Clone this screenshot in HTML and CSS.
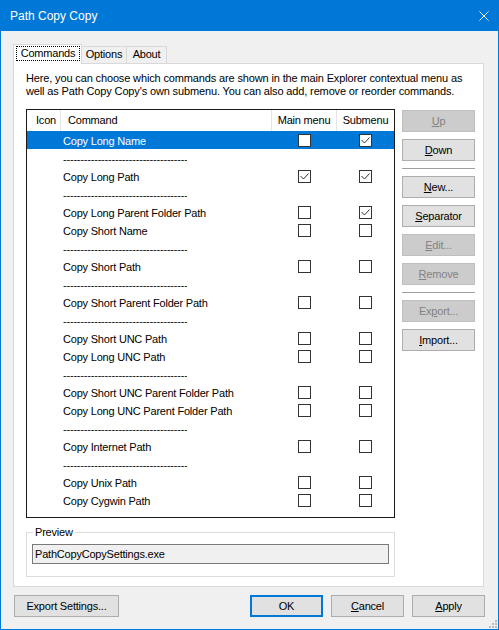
FILE: index.html
```html
<!DOCTYPE html>
<html lang="en">
<head>
  <meta charset="UTF-8" />
  <title>Path Copy Copy</title>
  <link rel="stylesheet" href="styles.css">
</head>
<body>
  <div class="window">
    <div class="titlebar">
      <span class="title">Path Copy Copy</span>
      <svg class="close" width="10" height="10" viewBox="0 0 10 10"><path d="M0.5 0.5L9.5 9.5M9.5 0.5L0.5 9.5" stroke="#fff" stroke-width="1" fill="none"/></svg>
    </div>

    <div class="content">
      <div class="tabs">
        <div class="tab active"><span class="focus">Commands</span></div>
        <div class="tab options">Options</div>
        <div class="tab about">About</div>
      </div>

      <div class="tab-page">
        <p class="intro">Here, you can choose which commands are shown in the main Explorer contextual menu as<br>well as Path Copy Copy's own submenu. You can also add, remove or reorder commands.</p>

        <div class="commands">
          <div class="list">
            <div class="list-head">
              <div class="col col-icon">Icon</div>
              <div class="col col-cmd">Command</div>
              <div class="col col-center">Main menu</div>
              <div class="col col-center last">Submenu</div>
            </div>

            <div class="row selected">
              <span class="name">Copy Long Name</span>
              <span class="cell"><i class="box"></i></span>
              <span class="cell"><i class="box"><svg viewBox="0 0 11 11"><polyline points="1.5,5 4.5,8 9.5,2.5"/></svg></i></span>
            </div>
            <div class="row"><span class="name dash">------------------------------------</span></div>
            <div class="row">
              <span class="name">Copy Long Path</span>
              <span class="cell"><i class="box"><svg viewBox="0 0 11 11"><polyline points="1.5,5 4.5,8 9.5,2.5"/></svg></i></span>
              <span class="cell"><i class="box"><svg viewBox="0 0 11 11"><polyline points="1.5,5 4.5,8 9.5,2.5"/></svg></i></span>
            </div>
            <div class="row"><span class="name dash">------------------------------------</span></div>
            <div class="row">
              <span class="name">Copy Long Parent Folder Path</span>
              <span class="cell"><i class="box"></i></span>
              <span class="cell"><i class="box"><svg viewBox="0 0 11 11"><polyline points="1.5,5 4.5,8 9.5,2.5"/></svg></i></span>
            </div>
            <div class="row">
              <span class="name">Copy Short Name</span>
              <span class="cell"><i class="box"></i></span>
              <span class="cell"><i class="box"></i></span>
            </div>
            <div class="row"><span class="name dash">------------------------------------</span></div>
            <div class="row">
              <span class="name">Copy Short Path</span>
              <span class="cell"><i class="box"></i></span>
              <span class="cell"><i class="box"></i></span>
            </div>
            <div class="row"><span class="name dash">------------------------------------</span></div>
            <div class="row">
              <span class="name">Copy Short Parent Folder Path</span>
              <span class="cell"><i class="box"></i></span>
              <span class="cell"><i class="box"></i></span>
            </div>
            <div class="row"><span class="name dash">------------------------------------</span></div>
            <div class="row">
              <span class="name">Copy Short UNC Path</span>
              <span class="cell"><i class="box"></i></span>
              <span class="cell"><i class="box"></i></span>
            </div>
            <div class="row">
              <span class="name">Copy Long UNC Path</span>
              <span class="cell"><i class="box"></i></span>
              <span class="cell"><i class="box"></i></span>
            </div>
            <div class="row"><span class="name dash">------------------------------------</span></div>
            <div class="row">
              <span class="name">Copy Short UNC Parent Folder Path</span>
              <span class="cell"><i class="box"></i></span>
              <span class="cell"><i class="box"></i></span>
            </div>
            <div class="row">
              <span class="name">Copy Long UNC Parent Folder Path</span>
              <span class="cell"><i class="box"></i></span>
              <span class="cell"><i class="box"></i></span>
            </div>
            <div class="row"><span class="name dash">------------------------------------</span></div>
            <div class="row">
              <span class="name">Copy Internet Path</span>
              <span class="cell"><i class="box"></i></span>
              <span class="cell"><i class="box"></i></span>
            </div>
            <div class="row"><span class="name dash">------------------------------------</span></div>
            <div class="row">
              <span class="name">Copy Unix Path</span>
              <span class="cell"><i class="box"></i></span>
              <span class="cell"><i class="box"></i></span>
            </div>
            <div class="row">
              <span class="name">Copy Cygwin Path</span>
              <span class="cell"><i class="box"></i></span>
              <span class="cell"><i class="box"></i></span>
            </div>
          </div>

          <div class="side">
            <button class="btn" disabled><u>U</u>p</button>
            <button class="btn"><u>D</u>own</button>
            <hr>
            <button class="btn"><u>N</u>ew...</button>
            <button class="btn"><u>S</u>eparator</button>
            <button class="btn" disabled><u>E</u>dit...</button>
            <button class="btn" disabled><u>R</u>emove</button>
            <hr>
            <button class="btn" disabled>Ex<u>p</u>ort...</button>
            <button class="btn"><u>I</u>mport...</button>
          </div>
        </div>

        <fieldset class="preview">
          <legend>Preview</legend>
          <div class="path">PathCopyCopySettings.exe</div>
        </fieldset>
      </div>

      <div class="footer">
        <button class="btn wide">Export Settings...</button>
        <button class="btn default">OK</button>
        <button class="btn"><u>C</u>ancel</button>
        <button class="btn"><u>A</u>pply</button>
      </div>
    </div>

    <svg class="grip" width="9" height="9" viewBox="0 0 9 9">
      <rect x="7" y="1" width="2" height="2"/>
      <rect x="4" y="4" width="2" height="2"/>
      <rect x="7" y="4" width="2" height="2"/>
      <rect x="1" y="7" width="2" height="2"/>
      <rect x="4" y="7" width="2" height="2"/>
      <rect x="7" y="7" width="2" height="2"/>
    </svg>
  </div>
</body>
</html>
```

FILE: styles.css
```css
* {
    box-sizing: border-box;
}

body {
    margin: 0;
    background: #f0f0f0;
    font-family: "Liberation Sans", Arial, sans-serif;
    font-size: 11px;
    letter-spacing: -0.2px;
    color: #000;
}

.window {
    position: relative;
    width: 499px;
    height: 630px;
    border: 1px solid #0078d7;
    border-top: 0;
    background: #f0f0f0;
}

/* Barre de titre */
.titlebar {
    height: 31px;
    background: #0078d7;
    color: #fff;
    display: flex;
    align-items: center;
    justify-content: space-between;
    padding: 0 9px;
    font-size: 12px;
    letter-spacing: 0;
}

.content {
    padding: 13px 13px 0 12px;
}

/* Onglets */
.tabs {
    display: flex;
    align-items: flex-end;
    height: 19px;
}

.tab {
    height: 17px;
    border: 1px solid #d9d9d9;
    border-bottom: 0;
    background: #f0f0f0;
    margin-left: -1px;
    line-height: 15px;
    text-align: center;
}

.tab.options { width: 46px; }
.tab.about { width: 41px; }

.tab.active {
    position: relative;
    z-index: 1;
    height: 20px;
    margin: 0 0 -1px 0;
    padding: 1px 1px 0 2px;
    background: #fff;
}

.focus {
    display: block;
    width: 64px;
    height: 15px;
    line-height: 14px;
    outline: 1px dotted #000;
    outline-offset: -1px;
}

.tab-page {
    width: 471px;
    background: #fff;
    border: 1px solid #d9d9d9;
    padding: 8px 8px 9px 12px;
}

.intro {
    margin: 0;
    line-height: 13px;
    letter-spacing: -0.14px;
    white-space: nowrap;
}

.commands {
    display: flex;
    gap: 7px;
    margin-top: 11px;
}

/* Liste des commandes */
.list {
    width: 369px;
    height: 409px;
    border: 1px solid #1a1a1a;
}

.list-head,
.row {
    display: grid;
    grid-template-columns: 34px 211px 65px 57px;
}

.list-head {
    height: 21px;
    line-height: 21px;
}

.col {
    border-right: 1px solid #e5e5e5;
}

.col.last { border-right: 0; }
.col-icon { padding-left: 9px; }
.col-cmd { padding-left: 7px; }
.col-center { text-align: center; }

.row {
    height: 18px;
    align-items: center;
}

.row.selected {
    background: #0078d7;
    color: #fff;
}

.name {
    grid-column: 2;
    height: 18px;
    padding: 2px 0 0 2px;
    line-height: 16px;
    white-space: nowrap;
}

.dash {
    overflow: hidden;
    width: 126px;
    color: #111;
}

.cell {
    display: flex;
    justify-content: center;
}

.box {
    display: block;
    width: 13px;
    height: 13px;
    border: 1px solid #333;
    background: #fff;
}

.box svg {
    display: block;
    width: 11px;
    height: 11px;
    fill: none;
    stroke: #333;
    stroke-width: 1;
}

/* Boutons */
.side {
    display: flex;
    flex-direction: column;
    gap: 7px;
    width: 73px;
    padding-top: 1px;
}

.side hr {
    margin: 0;
    height: 0;
    border: 0;
    border-top: 1px solid #a0a0a0;
}

.btn {
    width: 73px;
    height: 22px;
    padding: 0;
    border: 1px solid #adadad;
    background: #e1e1e1;
    font: inherit;
    letter-spacing: inherit;
    color: #000;
    text-align: center;
}

.btn:disabled {
    background: #cccccc;
    border-color: #bfbfbf;
    color: #838383;
}

.btn.default {
    border: 2px solid #0078d7;
    margin-left: auto;
}

.btn.wide {
    width: 105px;
}

/* Apercu */
.preview {
    width: 369px;
    min-width: 0;
    margin: 8px 0 0;
    padding: 5px 5px 12px;
    border: 1px solid #dcdcdc;
}

.preview legend {
    margin-left: 1px;
    padding: 0 2px;
    line-height: 13px;
}

.path {
    height: 20px;
    line-height: 18px;
    padding: 0 2px;
    border: 1px solid #7a7a7a;
    background: #f0f0f0;
}

.footer {
    display: flex;
    gap: 8px;
    padding: 8px 0 0 1px;
}

.grip {
    position: absolute;
    right: 1px;
    bottom: 1px;
    fill: #bcbcbc;
}
```
